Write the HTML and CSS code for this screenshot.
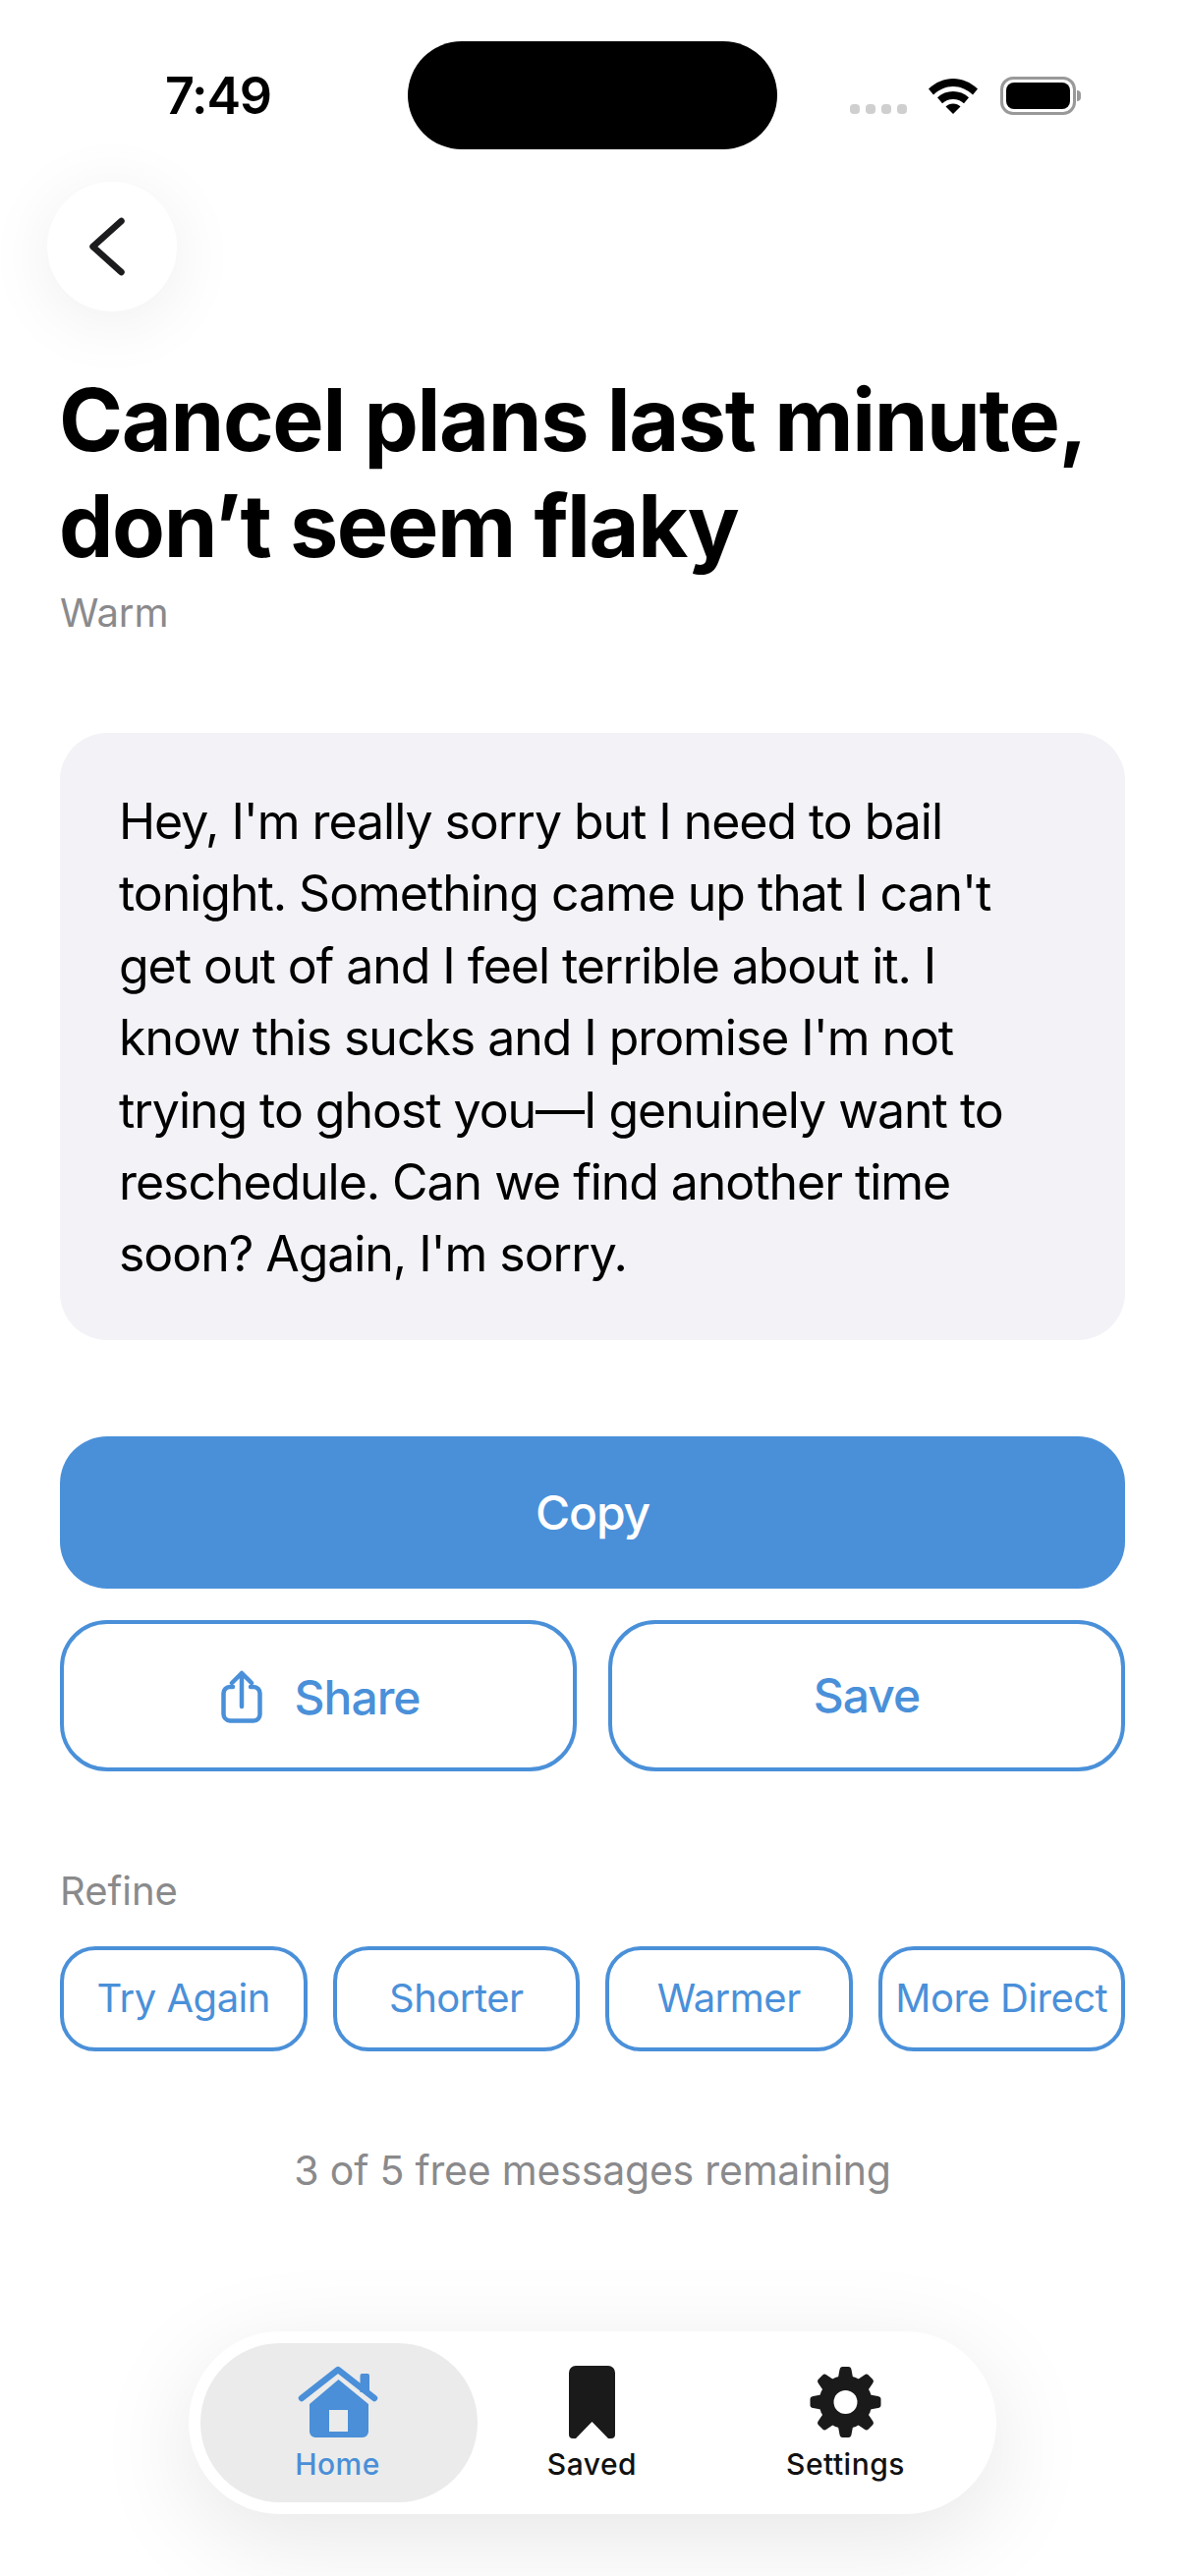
FILE: index.html
```html
<!DOCTYPE html>
<html lang="en">
<head>
<meta charset="utf-8">
<title>Message</title>
<link rel="stylesheet" href="styles.css">
</head>
<body>
<div class="screen">
  <header class="status">
    <span class="time">7:49</span>
    <div class="island"></div>
    <div class="indicators">
      <div class="signal"><i></i><i></i><i></i><i></i></div>
      <svg class="wifi" viewBox="0 0 50 37"><path d="M25 1C16 1 7.500 4.500 0 11.500l5 6C11 12 17.500 9 25 9s14 3 20 8.500l5-6C42.500 4.500 34 1 25 1Z"/><path d="M25 14c-6 0-11.500 2.200-16 6.300l5 6c3-2.800 6.800-4.300 11-4.300s8 1.500 11 4.300l5-6C36.500 16.200 31 14 25 14Z"/><path d="M25 26.500c-3 0-5.500 1-7.500 2.900L25 37l7.500-7.600c-2-1.900-4.500-2.900-7.500-2.900Z"/></svg>
      <div class="battery"><div class="battery-fill"></div></div>
      <div class="battery-cap"></div>
    </div>
  </header>

  <button class="back" aria-label="Back">
    <svg viewBox="0 0 36 60"><path d="M32.500 4 3.500 30l29 26"/></svg>
  </button>

  <main class="content">
    <h1 class="title">Cancel plans last minute,<br>don’t seem flaky</h1>
    <p class="tone">Warm</p>
    <div class="card">Hey, I'm really sorry but I need to bail tonight. Something came up that I can't get out of and I feel terrible about it. I know this sucks and I promise I'm not trying to ghost you—I genuinely want to reschedule. Can we find another time soon? Again, I'm sorry.</div>
    <button class="copy">Copy</button>
    <div class="actions">
      <button class="outline share">
        <svg class="share-icon" viewBox="0 0 42 54"><path d="M12 17H9a6.500 6.500 0 0 0-6.500 6.500v21A7 7 0 0 0 9 51.500h24a6.500 6.500 0 0 0 6.500-7v-21A6.500 6.500 0 0 0 33 17h-3"/><path d="M21 37V3M11 13 21 3l10 10"/></svg>
        <span>Share</span>
      </button>
      <button class="outline save">Save</button>
    </div>
    <p class="refine">Refine</p>
    <div class="chips">
      <button class="chip">Try Again</button>
      <button class="chip">Shorter</button>
      <button class="chip">Warmer</button>
      <button class="chip">More Direct</button>
    </div>
    <p class="remaining">3 of 5 free messages remaining</p>
  </main>

  <nav class="tabbar">
    <a class="tab active">
      <svg class="icon-home" viewBox="0 0 82 74"><path d="M63.500 14V10a2 2 0 0 1 2-2H71a2 2 0 0 1 2 2v17h-9.500Z"/><path class="roof" d="M4 33 41 4l37 29"/><path fill-rule="evenodd" d="M41.500 14 72 39v28a6 6 0 0 1-6 6H18a6 6 0 0 1-6-6V39ZM32 45v22h19V45Z"/></svg>
      <span>Home</span>
    </a>
    <a class="tab">
      <svg class="icon-saved" viewBox="0 0 47 74"><path d="M0 7a7 7 0 0 1 7-7h33a7 7 0 0 1 7 7v63q0 4-4 4h-3L23.500 57 7 74H4q-4 0-4-4Z"/></svg>
      <span>Saved</span>
    </a>
    <a class="tab">
      <svg class="icon-settings" viewBox="0 0 73 72">
        <circle cx="36.500" cy="36" r="27"/>
        <path class="tooth" d="M29 11 30.500 3q.5-3 3-3h6q2.500 0 3 3L44 11Z"/>
        <path class="tooth" transform="rotate(45 36.500 36)" d="M29 11 30.500 3q.5-3 3-3h6q2.500 0 3 3L44 11Z"/>
        <path class="tooth" transform="rotate(90 36.500 36)" d="M29 11 30.500 3q.5-3 3-3h6q2.500 0 3 3L44 11Z"/>
        <path class="tooth" transform="rotate(135 36.500 36)" d="M29 11 30.500 3q.5-3 3-3h6q2.500 0 3 3L44 11Z"/>
        <path class="tooth" transform="rotate(180 36.500 36)" d="M29 11 30.500 3q.5-3 3-3h6q2.500 0 3 3L44 11Z"/>
        <path class="tooth" transform="rotate(225 36.500 36)" d="M29 11 30.500 3q.5-3 3-3h6q2.500 0 3 3L44 11Z"/>
        <path class="tooth" transform="rotate(270 36.500 36)" d="M29 11 30.500 3q.5-3 3-3h6q2.500 0 3 3L44 11Z"/>
        <path class="tooth" transform="rotate(315 36.500 36)" d="M29 11 30.500 3q.5-3 3-3h6q2.500 0 3 3L44 11Z"/>
        <circle class="hole" cx="36.500" cy="36" r="12"/>
      </svg>
      <span>Settings</span>
    </a>
  </nav>
</div>
</body>
</html>
```

FILE: styles.css
```css
* { box-sizing: border-box; }
html, body { margin: 0; padding: 0; background: #fff; }
body { font-family: Inter, "Liberation Sans", sans-serif; color: #000; }
p, h1 { margin: 0; }
button { font-family: inherit; background: none; cursor: pointer; padding: 0; }

.screen {
  width: 1206px;
  height: 2622px;
  overflow: hidden;
  position: relative;
  background: #fff;
}

.status {
  height: 152px;
  padding-top: 42px;
  position: relative;
}
.time {
  position: absolute;
  left: 168px;
  top: 68px;
  font-size: 52px;
  line-height: 60px;
  font-weight: 600;
  letter-spacing: -1.2px;
}
.island {
  width: 376px;
  height: 110px;
  margin-left: 415px;
  border-radius: 55px;
  background: #000;
}
.indicators {
  position: absolute;
  left: 865px;
  top: 78px;
  display: flex;
  align-items: flex-end;
  height: 39px;
}
.signal { display: flex; gap: 6px; padding-bottom: 1px; margin-right: 22px; }
.signal i { width: 10px; height: 10px; border-radius: 4px; background: #cfcfcf; }
.wifi { width: 50px; height: 37px; margin: 0 23px 1px 0; fill: #000; display: block; }
.battery {
  width: 77px;
  height: 39px;
  border: 3px solid #999;
  border-radius: 13px;
  padding: 3px;
}
.battery-fill { width: 100%; height: 100%; background: #000; border-radius: 8px; }
.battery-cap { width: 4px; height: 11px; background: #999; border-radius: 0 4px 4px 0; margin: 0 0 14px 1px; }

.back {
  display: flex;
  align-items: center;
  justify-content: center;
  width: 132px;
  height: 132px;
  margin: 33px 0 0 48px;
  border: 0;
  border-radius: 50%;
  background: #fff;
  box-shadow: 0 10px 70px rgba(0,0,0,.07);
}
.back svg { width: 36px; height: 60px; margin-right: 10px; fill: none; stroke: #1c1c1e; stroke-width: 6.500px; stroke-linecap: round; stroke-linejoin: round; }

.content { padding: 56px 61px 0; }
.title {
  font-size: 88px;
  line-height: 108px;
  font-weight: 700;
  letter-spacing: -1.35px;
  margin-left: -1px;
}
.tone { font-size: 40px; line-height: 48px; color: #8a8a8c; margin-top: 11px; }
.card {
  margin-top: 98px;
  height: 618px;
  padding: 54px 60px 0;
  background: #f2f2f7;
  border-radius: 48px;
  font-size: 50px;
  line-height: 73.400px;
  letter-spacing: -1.050px;
  color: #000;
}
.copy {
  display: block;
  width: 100%;
  height: 155px;
  margin-top: 98px;
  border: 0;
  border-radius: 48px;
  background: #4a90d9;
  color: #fff;
  font-size: 48px;
  font-weight: 500;
  letter-spacing: -1.100px;
}
.actions { display: grid; grid-template-columns: 1fr 1fr; gap: 32px; margin-top: 32px; }
.outline {
  height: 154px;
  border: 4px solid #4a90d9;
  border-radius: 48px;
  background: #fff;
  color: #4a90d9;
  font-size: 48px;
  font-weight: 500;
  letter-spacing: -1px;
  display: flex;
  align-items: center;
  justify-content: center;
}
.share { gap: 33px; padding: 2px 0 0 4px; }
.save { padding-bottom: 2px; }
.share-icon { width: 42px; height: 54px; fill: none; stroke: #4a90d9; stroke-width: 4.500px; stroke-linecap: round; stroke-linejoin: round; }
.refine { margin-top: 98px; font-size: 40px; line-height: 48px; color: #8a8a8c; }
.chips { display: grid; grid-template-columns: repeat(4, 1fr); gap: 26px; margin-top: 32px; }
.chip {
  height: 107px;
  padding-bottom: 2px;
  border: 4px solid #4a90d9;
  border-radius: 36px;
  background: #fff;
  color: #4a90d9;
  font-size: 40px;
  font-weight: 400;
  letter-spacing: -.5px;
  white-space: nowrap;
}
.remaining { margin-top: 96px; text-align: center; font-size: 41px; line-height: 50px; letter-spacing: -.2px; color: #8a8a8c; }

.tabbar {
  position: absolute;
  left: 192px;
  top: 2373px;
  width: 822px;
  height: 186px;
  padding: 12px;
  border-radius: 93px;
  background: #fff;
  box-shadow: 0 24px 100px rgba(0,0,0,.1);
  display: flex;
}
.tab {
  display: flex;
  flex-direction: column;
  align-items: center;
  padding-top: 23px;
  border-radius: 81px;
  color: #111;
  font-size: 30px;
  line-height: 36px;
  font-weight: 500;
  letter-spacing: .5px;
}
.tab:nth-child(1) { flex: 0 0 282px; padding-right: 3px; }
.tab:nth-child(2) { flex: 0 0 233px; }
.tab:nth-child(3) { flex: 0 0 283px; }
.tab svg { display: block; height: 74px; margin-bottom: 8px; fill: #1a1a1a; }
.icon-home { width: 82px; }
.icon-saved { width: 47px; }
.icon-settings { width: 73px; }
.tab.active { background: #ebebeb; color: #4a8fd8; }
.tab.active svg { fill: #4a8fd8; }
.roof { fill: none; stroke: #4a8fd8; stroke-width: 6.500px; stroke-linecap: round; stroke-linejoin: round; }
.hole { fill: #fff; }
```
